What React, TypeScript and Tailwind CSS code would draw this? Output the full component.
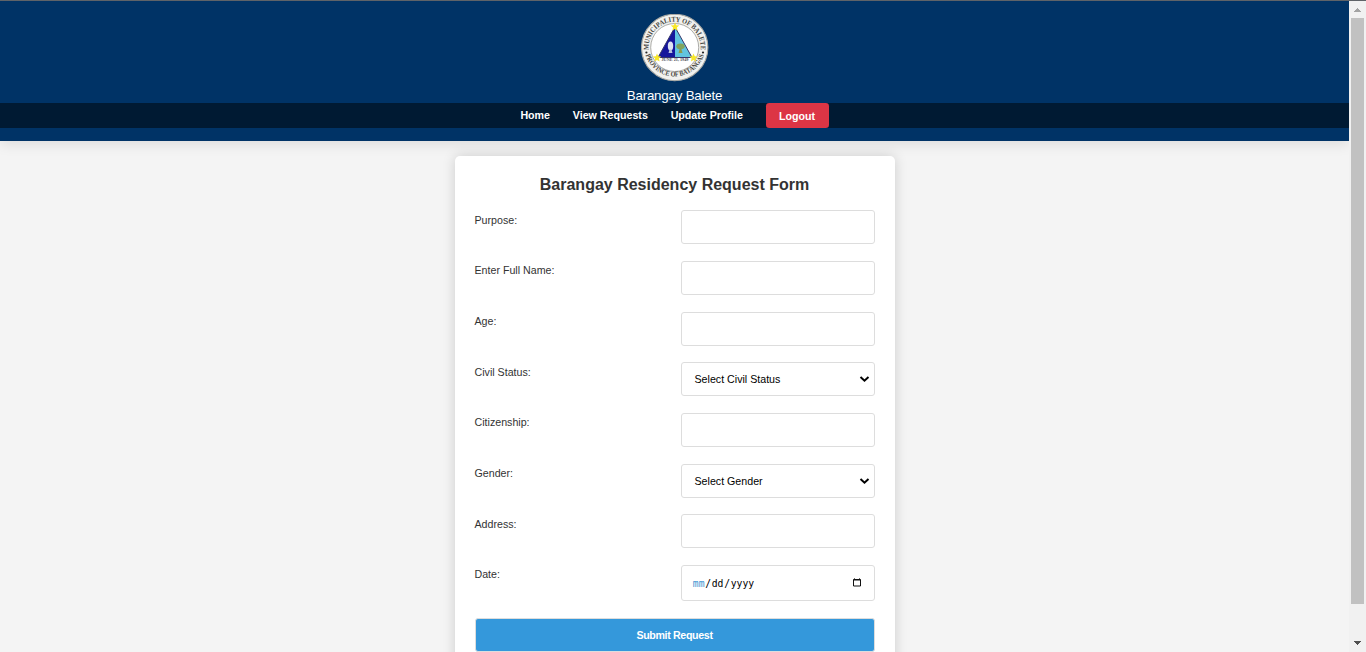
import React from "react";

function Seal() {
  return (
    <svg width="68" height="68" viewBox="0 0 68 68" className="block shrink-0" aria-label="Municipality of Balete seal">
      <defs>
        <path id="seal-top" d="M 8.9 41 A 26 26 0 1 1 59.1 41" />
        <path id="seal-bottom" d="M 4 38 A 30.5 30.5 0 0 0 64 38" />
      </defs>
      <circle cx="33.7" cy="33.5" r="33.2" fill="#f1f1ee" stroke="#a9a9a4" strokeWidth="1.1" />
      <circle cx="33.7" cy="33.5" r="24" fill="#ffffff" stroke="#8b8b87" strokeWidth="0.7" />
      <g fill="#454541" fontFamily="'Liberation Serif', serif" fontWeight="700" fontSize="7.2" transform="translate(-0.3 -0.5)">
        <text textAnchor="middle">
          <textPath href="#seal-top" startOffset="50%" textLength="86" lengthAdjust="spacingAndGlyphs">MUNICIPALITY OF BALETE</textPath>
        </text>
        <text textAnchor="middle">
          <textPath href="#seal-bottom" startOffset="50%" textLength="77" lengthAdjust="spacingAndGlyphs">PROVINCE OF BATANGAS</textPath>
        </text>
      </g>
      <circle cx="5.4" cy="38.5" r="1.1" fill="#222" />
      <circle cx="62" cy="38.5" r="1.1" fill="#222" />
      <path d="M34 13 L17 43.5 H34 Z" fill="#16169c" />
      <path d="M34 13 L51 43.5 H34 Z" fill="#62c4df" />
      <path d="M34 13 L17 43.5 H51 Z" fill="none" stroke="#35356a" strokeWidth="1" />
      <ellipse cx="29.5" cy="32" rx="2.7" ry="4.6" fill="#dfe5f3" />
      <path d="M28.5 35.5 H30.5 L31.5 39 H27.5 Z" fill="#b9c3df" />
      <ellipse cx="39.5" cy="32.3" rx="4.2" ry="2.9" fill="#81a45d" />
      <path d="M38.8 34.5 H40.3 L41.5 39 H37.5 Z" fill="#8b9a4d" />
      <text x="34" y="47.3" textAnchor="middle" textLength="27" lengthAdjust="spacingAndGlyphs" fontFamily="'Liberation Serif', serif" fontWeight="700" fontSize="4.5" fill="#4c4c55">JUNE 21, 1949</text>
      <g fill="#f8e72a">
        <path id="seal-star" d="M34 8.5 L35.2 11.3 L38.2 11.5 L35.9 13.5 L36.6 16.5 L34 14.9 L31.4 16.5 L32.1 13.5 L29.8 11.5 L32.8 11.3 Z" />
        <use href="#seal-star" x="-18" y="31" />
        <use href="#seal-star" x="18.5" y="31" />
      </g>
    </svg>
  );
}

const box =
  "h-[34px] w-[194px] rounded-[3px] border border-[#dddddd] bg-white text-[10.67px] text-black";

function Row({ label, children }: { label: string; children: React.ReactNode }) {
  return (
    <div className="mb-[16.67px] flex items-start justify-between">
      <label className="pt-[3.3px] text-[10.67px] leading-[12px] text-[#333333]">{label}</label>
      {children}
    </div>
  );
}

function Choice({ text }: { text: string }) {
  return (
    <button type="button" className={`${box} flex items-center justify-between pr-[3.5px] pl-[13px]`}>
      <span>{text}</span>
      <svg width="11" height="8" viewBox="0 0 11 8" fill="none" stroke="#000" strokeWidth="2">
        <path d="M1.5 2 L5.5 5.7 L9.5 2" />
      </svg>
    </button>
  );
}

export default function App() {
  return (
    <div className="flex h-[652px] w-full overflow-hidden bg-[#f4f4f4] font-['Liberation_Sans',Arial,sans-serif]">
      <div className="flex min-w-0 flex-1 flex-col">
        <header className="h-[141px] shrink-0 border-t border-[#5f6368] bg-[#003366] text-white shadow-[0_3px_13px_rgba(0,0,0,0.1)]">
          <div className="flex h-[102px] flex-col items-center pt-[13px]">
            <Seal />
            <p className="mt-[6px] h-[15px] text-[13.33px] leading-[16px] tracking-[-0.21px]">Barangay Balete</p>
          </div>
          <nav className="flex h-[25px] items-start justify-center gap-[22.8px] bg-[#001a33] text-[10.67px] leading-[12px] font-bold">
            <a className="pt-[6px]">Home</a>
            <a className="pt-[6px]">View Requests</a>
            <a className="pt-[6px]">Update Profile</a>
            <a className="flex h-[25px] items-center rounded-[3.33px] bg-[#dc3545] px-[13.4px] pt-[1px]">Logout</a>
          </nav>
        </header>
        <main className="flex justify-center pt-[15px]">
          <form className="h-[540px] w-[440px] shrink-0 rounded-[5px] bg-white px-[20px] pt-[19px] shadow-[0_0_13px_rgba(0,0,0,0.16)]">
            <h2 className="mb-[15.4px] text-center text-[16px] leading-[20px] font-bold text-[#333333]">Barangay Residency Request Form</h2>
            <Row label="Purpose:"><input className={box} /></Row>
            <Row label="Enter Full Name:"><input className={box} /></Row>
            <Row label="Age:"><input className={box} /></Row>
            <Row label="Civil Status:"><Choice text="Select Civil Status" /></Row>
            <Row label="Citizenship:"><input className={box} /></Row>
            <Row label="Gender:"><Choice text="Select Gender" /></Row>
            <Row label="Address:"><input className={box} /></Row>
            <Row label="Date:">
              <div className="flex h-[36px] w-[194px] items-center justify-between rounded-[3px] border border-[#dddddd] bg-white pr-[13px] pl-[11.3px] text-black">
                <span className="flex gap-[0.67px] pt-[2.5px] font-['DejaVu_Sans_Mono',monospace] text-[9.75px]">
                  <span className="text-[#3b93d0]">mm</span><span>/</span><span>dd</span><span>/</span><span>yyyy</span>
                </span>
                <svg width="8" height="9" viewBox="0 0 8 9" fill="none" stroke="#111">
                  <path d="M0.5 1.5 H7.5 V8 H0.5 Z M0.5 2 H7.5 M1.5 0.4 V2 M6.5 0.4 V2" />
                </svg>
              </div>
            </Row>
            <button type="button" className="block h-[34px] w-[400px] rounded-[3px] border border-[#dddddd] bg-[#3498db] text-[10.67px] font-bold tracking-[-0.35px] text-white">Submit Request</button>
          </form>
        </main>
      </div>
      <aside className="flex w-[17px] shrink-0 flex-col items-center bg-[#f1f1f1]">
        <div className="h-px w-full shrink-0 bg-[#5f6368]" />
        <div className="flex h-[17px] items-center">
          <svg width="7" height="4" viewBox="0 0 7 4" shapeRendering="crispEdges" fill="#a3a3a3"><path d="M3 0h1v1h1v1h1v1h1v1H0V3h1V2h1V1h1Z" /></svg>
        </div>
        <div className="h-[586px] w-[13px] bg-[#c1c1c1]" />
        <div className="mt-[37px]">
          <svg width="7" height="4" viewBox="0 0 7 4" shapeRendering="crispEdges" fill="#505050" className="block"><path d="M0 0h7v1H6v1H5v1H4v1H3V3H2V2H1V1H0Z" /></svg>
        </div>
      </aside>
    </div>
  );
}
